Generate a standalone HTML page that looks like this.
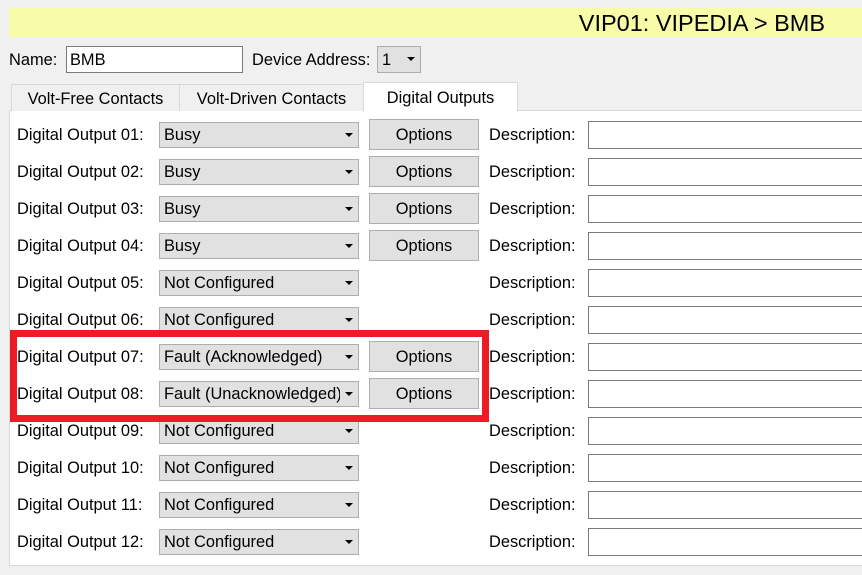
<!DOCTYPE html>
<html><head><style>
*{margin:0;padding:0;box-sizing:border-box}
body{width:862px;height:575px;background:#f0f0f0;font-family:"Liberation Sans",sans-serif;font-size:16.4px;color:#000;position:relative;overflow:hidden}
.a{position:absolute;white-space:nowrap}
.hdr{left:9px;top:8px;width:853px;height:29px;background:#f8fca8}
.title{right:37px;top:9px;font-size:23.5px;line-height:28px}
.inp{background:#fff;border:1px solid #7a7a7a}
.dd{background:#e1e1e1;border:1px solid #adadad;height:26px;line-height:25px;padding-left:4px;overflow:hidden}
.dd:after{content:"";position:absolute;right:5px;top:10px;border-left:4px solid transparent;border-right:4px solid transparent;border-top:4px solid #000}
.btn{background:#e1e1e1;border:1px solid #adadad;height:31px;line-height:30px;text-align:center;width:110px}
.tab{top:84px;height:27px;line-height:28px;background:#f0f0f0;border:1px solid #d9d9d9;border-bottom:none;text-align:center}
.panel{left:9px;top:110px;width:860px;height:456px;background:#fff;border:1px solid #d9d9d9}
.red{left:10px;top:330px;width:479px;height:92px;border:7px solid #ed1c24}
</style></head><body>
<div class="a hdr"></div>
<div class="a title">VIP01: VIPEDIA &gt; BMB</div>
<div class="a" style="left:9px;top:51px">Name:</div>
<div class="a inp" style="left:66px;top:46px;width:177px;height:27px;line-height:26px;padding-left:3px">BMB</div>
<div class="a" style="left:252px;top:51px">Device Address:</div>
<div class="a dd" style="left:377px;top:46px;width:44px;height:27px;line-height:27px">1</div>
<div class="a panel"></div>
<div class="a tab" style="left:11px;width:169px">Volt-Free Contacts</div>
<div class="a tab" style="left:179px;width:185px">Volt-Driven Contacts</div>
<div class="a tab" style="left:363px;top:82px;width:155px;height:30px;line-height:30px;background:#fff">Digital Outputs</div>
<div id="rows"></div>
<div class="a red"></div>
<script>
var v=["Busy","Busy","Busy","Busy","Not Configured","Not Configured","Fault (Acknowledged)","Fault (Unacknowledged)","Not Configured","Not Configured","Not Configured","Not Configured"];
var opt=[1,1,1,1,0,0,1,1,0,0,0,0];var h="";
for(var i=0;i<12;i++){var c=135+37*i;var n=(i<9?"0":"")+(i+1);
h+='<div class="a" style="left:17px;top:'+(c-9)+'px">Digital Output '+n+':</div>';
h+='<div class="a dd" style="left:159px;top:'+(c-13)+'px;width:200px"><span style="display:block;width:176px;overflow:hidden">'+v[i]+'</span></div>';
if(opt[i])h+='<div class="a btn" style="left:369px;top:'+(c-16)+'px">Options</div>';
h+='<div class="a" style="left:489px;top:'+(c-9)+'px">Description:</div>';
h+='<div class="a inp" style="left:588px;top:'+(c-14)+'px;width:280px;height:28px"></div>';}
document.getElementById("rows").innerHTML=h;
</script>
</body></html>
